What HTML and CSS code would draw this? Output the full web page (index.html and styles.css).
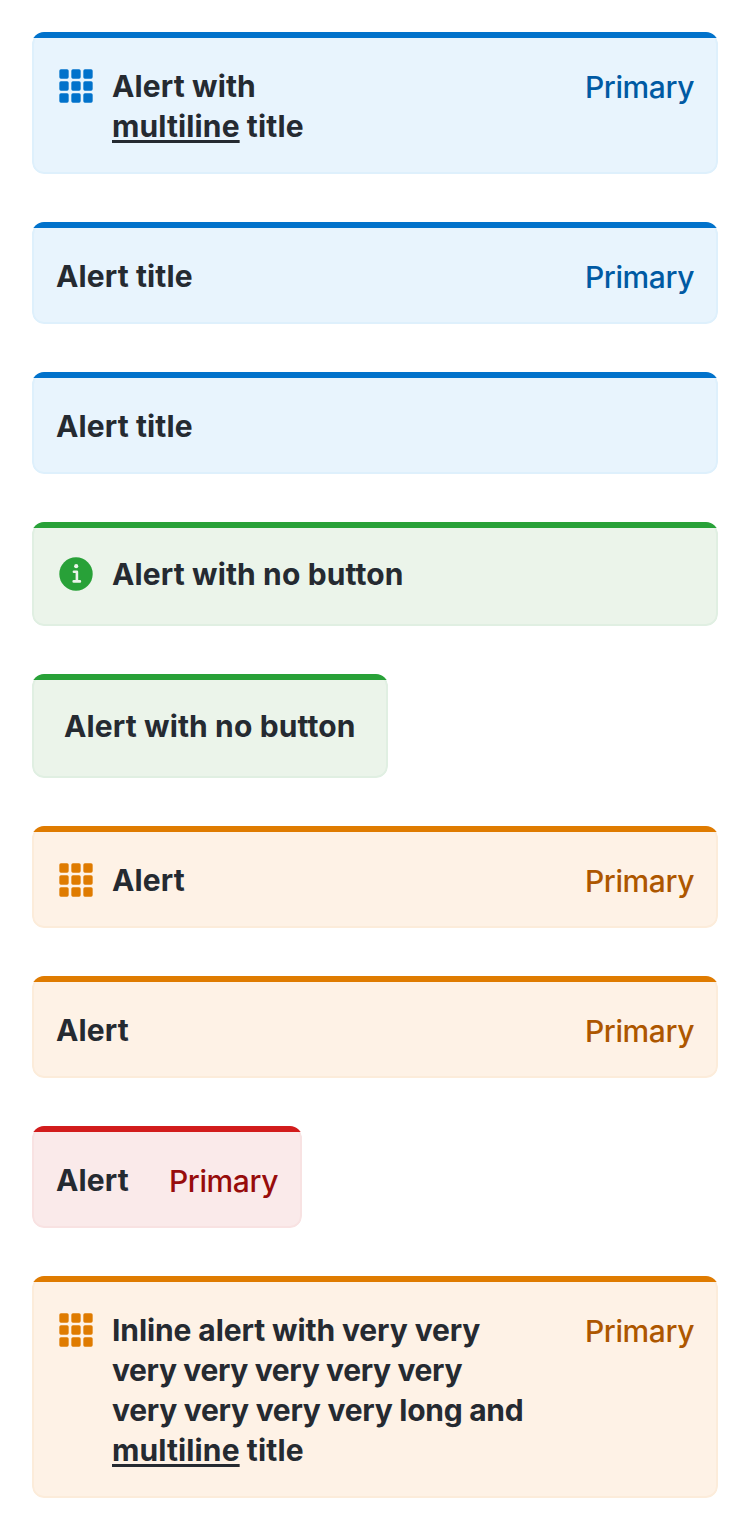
FILE: index.html
```html
<!DOCTYPE html>
<html lang="en">
<head>
<meta charset="utf-8">
<title>Alerts</title>
<link rel="stylesheet" href="styles.css">
</head>
<body>
<svg class="sprite" width="0" height="0">
  <symbol id="grid" viewBox="0 0 24 24">
    <rect x="2" y="2" width="5.6" height="5.6" rx="0.95"/><rect x="9.2" y="2" width="5.6" height="5.6" rx="0.95"/><rect x="16.4" y="2" width="5.6" height="5.6" rx="0.95"/>
    <rect x="2" y="9.2" width="5.6" height="5.6" rx="0.95"/><rect x="9.2" y="9.2" width="5.6" height="5.6" rx="0.95"/><rect x="16.4" y="9.2" width="5.6" height="5.6" rx="0.95"/>
    <rect x="2" y="16.4" width="5.6" height="5.6" rx="0.95"/><rect x="9.2" y="16.4" width="5.6" height="5.6" rx="0.95"/><rect x="16.4" y="16.4" width="5.6" height="5.6" rx="0.95"/>
  </symbol>
</svg>
<main class="list">
  <section class="alert info">
    <svg class="icon"><use href="#grid"/></svg>
    <h2 class="title">Alert with<br><u>multiline</u> title</h2>
    <a class="action">Primary</a>
  </section>
  <section class="alert info"><h2 class="title">Alert title</h2><a class="action">Primary</a></section>
  <section class="alert info"><h2 class="title">Alert title</h2></section>
  <section class="alert success"><svg class="icon" viewBox="0 0 40 40"><circle cx="20" cy="20" r="16.7"/><circle class="mark" cx="20.2" cy="12.2" r="2.1"/><path class="stroke" d="M17.9 17.8h3v9.6M17.7 27.4h6.2"/></svg><h2 class="title">Alert with no button</h2></section>
  <section class="alert success compact"><h2 class="title">Alert with no button</h2></section>
  <section class="alert warning"><svg class="icon"><use href="#grid"/></svg><h2 class="title">Alert</h2><a class="action">Primary</a></section>
  <section class="alert warning"><h2 class="title">Alert</h2><a class="action">Primary</a></section>
  <section class="alert critical compact"><h2 class="title">Alert</h2><a class="action">Primary</a></section>
  <section class="alert warning">
    <svg class="icon"><use href="#grid"/></svg>
    <h2 class="title"><span class="snug">Inline alert with very very</span><br><span class="tight">very very very very very<br></span><span class="close">very very very very long and</span><br><u>multiline</u> title</h2>
    <a class="action">Primary</a>
  </section>
</main>
</body>
</html>
```
FILE: styles.css
```css
* { box-sizing: border-box; }
body { margin: 0; background: #fff; font-family: Inter, "Liberation Sans", sans-serif; }
.sprite { display: block; }
.list { display: flex; flex-direction: column; align-items: flex-start; gap: 48px; padding: 32px; }
.alert {
  position: relative;
  display: flex; align-items: flex-start; width: 686px;
  padding: 32px 22px 26px; border: 2px solid var(--line); border-radius: 12px;
  background: var(--surface); color: #252a31; clip-path: inset(0 round 12px);
}
.alert::before {
  content: ""; position: absolute; top: -2px; left: -2px; right: -2px;
  height: 6px; background: var(--accent);
}
.icon { flex: none; width: 40px; height: 40px; margin: 0 16px 0 0; fill: var(--accent); }
.mark { fill: var(--surface); }
.stroke { fill: none; stroke: var(--surface); stroke-width: 2.6; stroke-linecap: round; stroke-linejoin: round; }
.title { margin: 0; font-size: 30px; line-height: 40px; font-weight: 700; letter-spacing: 0.12px; white-space: nowrap; }
.title u { text-decoration-thickness: 3px; text-underline-offset: 3px; }
.snug { letter-spacing: -0.1px; }
.tight { letter-spacing: -0.36px; }
.close { letter-spacing: -0.27px; }
.action { margin: 1px 0 -1px auto; font-size: 30px; line-height: 40px; font-weight: 500; letter-spacing: -0.4px; color: var(--link); }
.info { --accent: #0172cb; --link: #005aa3; --surface: #e8f4fd; --line: #def0fc; }
.success { --accent: #28a138; --surface: #ebf4ea; --line: #e0efe2; padding: 30px 22px; }
.warning { --accent: #df7b00; --link: #ad5700; --surface: #fef2e6; --line: #fcecda; }
.critical { --accent: #d21c1c; --link: #970c0c; --surface: #faeaea; --line: #f8e2e2; }
.critical.compact { width: 270px; }
.success.compact { width: 356px; padding: 30px; }
```
